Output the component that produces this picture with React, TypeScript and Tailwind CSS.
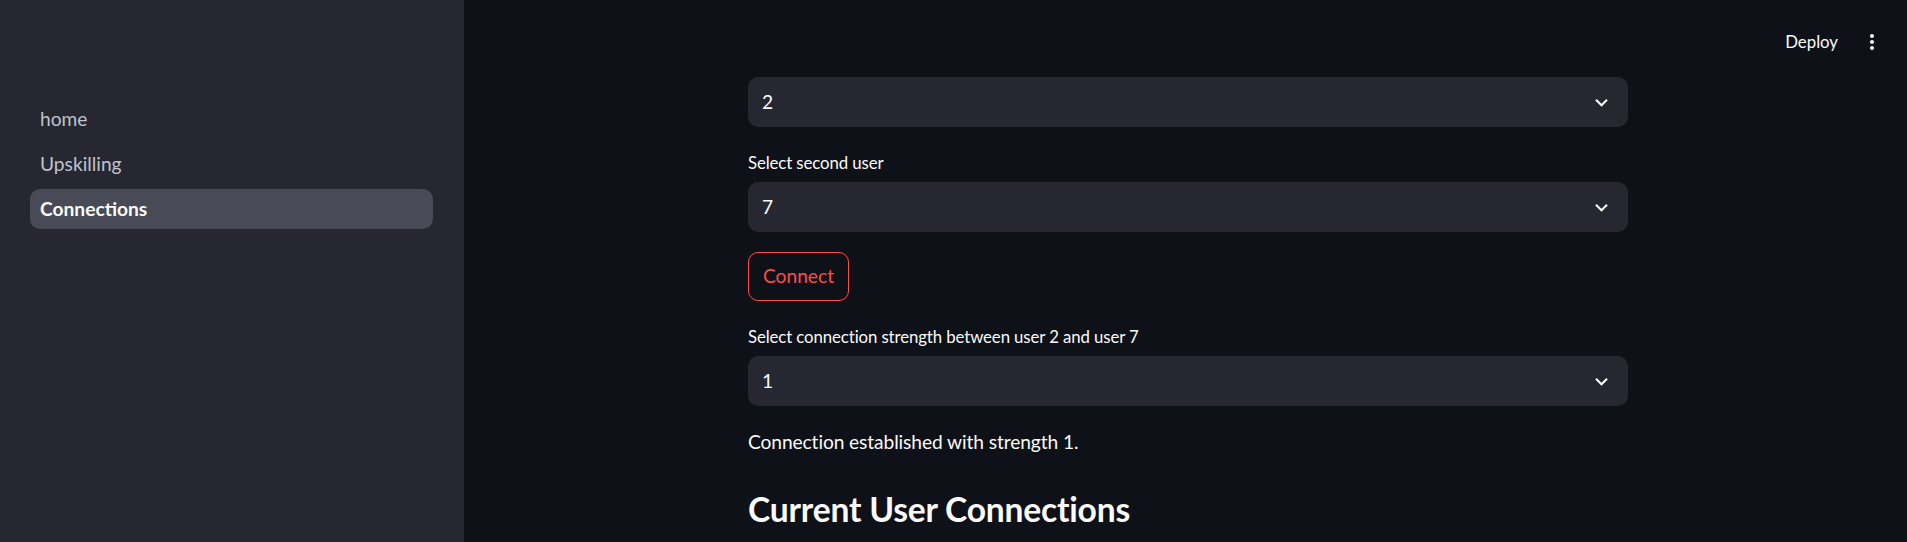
import React from "react";

const font = { fontFamily: "Lato, 'Noto Sans', sans-serif" };

function Chevron() {
  return (
    <svg viewBox="0 0 24 24" className="h-[25px] w-[25px] fill-[#fafafa]" aria-hidden>
      <path d="M16.59 8.59 12 13.17 7.41 8.59 6 10l6 6 6-6z" />
    </svg>
  );
}

function Select({ value }: { value: string }) {
  return (
    <div className="flex h-[50px] w-full items-center justify-between rounded-[10px] bg-[#262730] pl-[14px] pr-[14px] text-[19.2px] text-[#fafafa]">
      <span>{value}</span>
      <Chevron />
    </div>
  );
}

function Field({ label, value }: { label?: string; value: string }) {
  return (
    <div className="flex flex-col gap-[4px]">
      {label ? (
        <label className="flex h-[31px] items-center text-[16.8px] tracking-[-0.1px] text-[#fafafa]">{label}</label>
      ) : null}
      <Select value={value} />
    </div>
  );
}

const nav = [
  { name: "home", active: false },
  { name: "Upskilling", active: false },
  { name: "Connections", active: true },
];

export default function App() {
  return (
    <div className="flex h-[542px] w-full overflow-hidden bg-[#0e1117]" style={font}>
      <aside className="flex h-full w-[464px] shrink-0 flex-col gap-[5px] bg-[#262730] px-[30px] pt-[99px]">
        {nav.map((n) => (
          <div
            key={n.name}
            className={
              n.active
                ? "flex h-[40px] w-[403px] items-center rounded-[10px] bg-[#484a55] px-[10px] text-[19.2px] font-bold text-[#fafafa]"
                : "flex h-[40px] w-[403px] items-center rounded-[10px] px-[10px] text-[19.2px] text-[#bfc3cc]"
            }
          >
            {n.name}
          </div>
        ))}
      </aside>

      <main className="relative flex-1">
        <div className="absolute right-[23px] top-[29px] flex items-center gap-[22px] text-[16.8px] text-[#fafafa]">
          <span>Deploy</span>
          <svg viewBox="0 0 24 24" className="h-[24px] w-[24px] fill-[#fafafa]" aria-hidden>
            <path d="M12 8c1.1 0 2-.9 2-2s-.9-2-2-2-2 .9-2 2 .9 2 2 2zm0 2c-1.1 0-2 .9-2 2s.9 2 2 2 2-.9 2-2-.9-2-2-2zm0 6c-1.1 0-2 .9-2 2s.9 2 2 2 2-.9 2-2-.9-2-2-2z" />
          </svg>
        </div>

        <div className="ml-[284px] flex w-[880px] flex-col gap-[20px] pt-[77px]">
          <Field value="2" />
          <Field label="Select second user" value="7" />
          <div>
            <button className="flex h-[49px] w-[101px] items-center justify-center rounded-[10px] border border-[#ff4b4b] text-[19.2px] text-[#ff4b4b]">
              Connect
            </button>
          </div>
          <Field label="Select connection strength between user 2 and user 7" value="1" />
          <p className="h-[31px] text-[19.2px] leading-[31px] tracking-[-0.1px] text-[#fafafa]">
            Connection established with strength 1.
          </p>
          <h3 className="pt-[12px] text-[33.6px] font-bold leading-[40px] tracking-[-0.2px] text-[#fafafa]">
            Current User Connections
          </h3>
        </div>
      </main>
    </div>
  );
}
